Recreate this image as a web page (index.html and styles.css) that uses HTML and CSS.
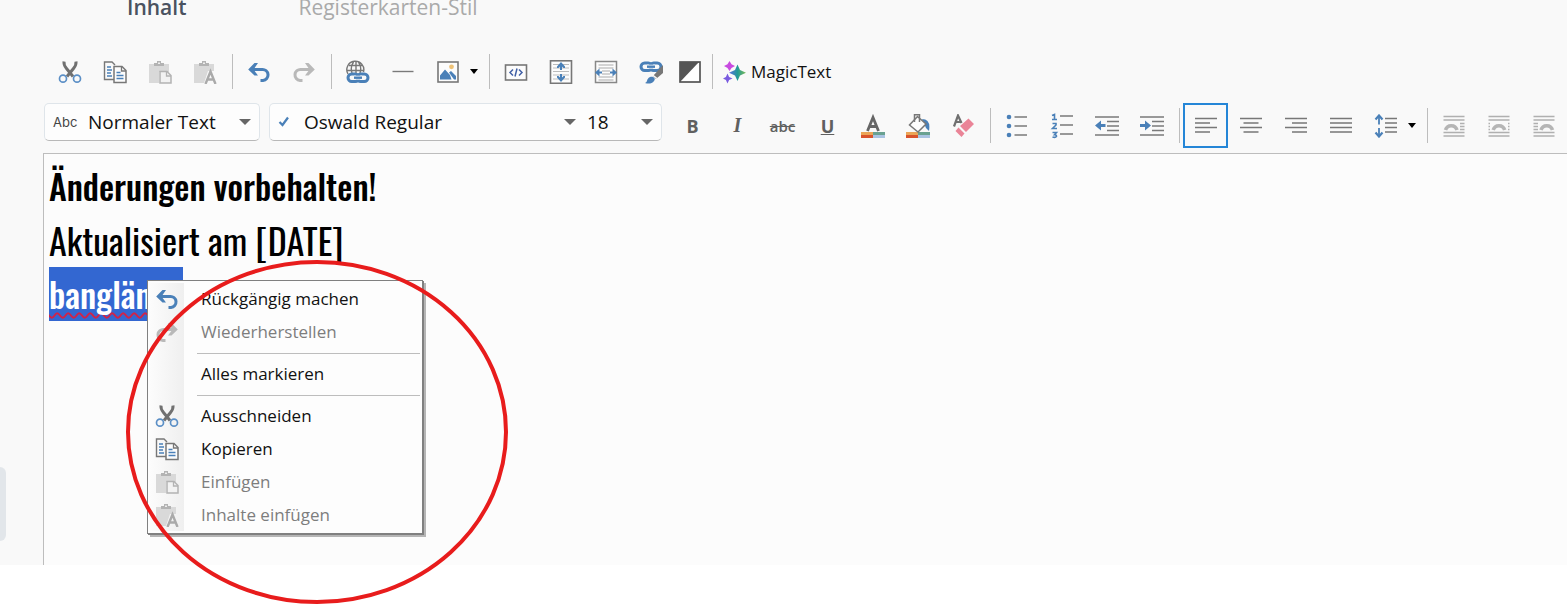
FILE: index.html
```html
<!DOCTYPE html>
<html lang="de">
<head>
<meta charset="utf-8">
<title>Texteditor</title>
<link rel="stylesheet" href="styles.css">
</head>
<body>
<svg class="defs" aria-hidden="true">
  <symbol id="cut" viewBox="0 0 24 24">
    <path d="M6 1.500Q5.500 5 8.500 8.500L15 16.500M18 1.500Q18.500 5 15.500 8.500L9 16.500" fill="none" stroke="#707070" stroke-width="3"/>
    <g fill="none" stroke="#5b8fc6" stroke-width="1.700"><circle cx="5" cy="18.700" r="3.500"/><circle cx="19" cy="18.700" r="3.500"/></g>
  </symbol>
  <symbol id="copy" viewBox="0 0 24 24">
    <path d="M11 19.500H1.500V2H9l3 3" fill="none" stroke="#777" stroke-width="1.400"/>
    <path d="M4 7h4M4 10h5M4 13h4M4 16h5" stroke="#4a80b8" stroke-width="1.300"/>
    <path d="M11 6.500h8l4 4V22.500H11z" fill="#fcfcfc" stroke="#777" stroke-width="1.500"/>
    <path d="M18.500 7v4H23" fill="none" stroke="#777" stroke-width="1.300"/>
    <path d="M13.500 12.500h4M13.500 15.500h7M13.500 18.500h7" stroke="#4a80b8" stroke-width="1.400"/>
  </symbol>
  <symbol id="board" viewBox="0 0 24 24">
    <path d="M1 4h20v8H11v11H1z" fill="#d9d9d9"/>
    <path d="M6 6V3h3V1h4v2h3v3z" fill="#b3b3b3"/><path d="M10 2.500h2v1.500h-2z" fill="#eee"/>
  </symbol>
  <symbol id="paste" viewBox="0 0 24 24">
    <use href="#board"/>
    <path d="M12 11.500h7l4 4V23H12z" fill="#f2f2f2" stroke="#b3b3b3" stroke-width="1.500"/>
    <path d="M18.500 11.500v4.500H23" fill="none" stroke="#b3b3b3" stroke-width="1.300"/>
  </symbol>
  <symbol id="paste-text" viewBox="0 0 24 24">
    <path d="M1 4h20v7h-6l-4 12H1z" fill="#d9d9d9"/>
    <path d="M6 6V3h3V1h4v2h3v3z" fill="#b3b3b3"/><path d="M10 2.500h2v1.500h-2z" fill="#eee"/>
    <path d="M12.500 24 17.500 11.500l5 12.500M14.500 19.500h6" fill="none" stroke="#aaa" stroke-width="2.400"/>
  </symbol>
  <symbol id="undo" viewBox="0 0 24 24">
    <path d="M4 9.500h11a5.300 5.300 0 0 1 1 11h-2.500" fill="none" stroke="#4a80b8" stroke-width="3"/>
    <path d="M7.500 3H11L6.500 9.500l4.500 6H7.500L1.200 9.500z" fill="#4a80b8"/>
  </symbol>
  <symbol id="redo" viewBox="0 0 24 24">
    <path d="M20 9.500H9a5.300 5.300 0 0 0-1 11h2.500" fill="none" stroke="#b9b9b9" stroke-width="3"/>
    <path d="M16.500 3H13l4.500 6.500-4.500 6h3.500l6.300-6z" fill="#b9b9b9"/>
  </symbol>
  <symbol id="chain" viewBox="0 0 24 12">
    <g fill="none" stroke="#4a80b8" stroke-width="3"><rect x="2" y="2" width="11" height="7.500" rx="3.700"/><rect x="11" y="2" width="11" height="7.500" rx="3.700"/></g>
    <path d="M8 5.700h8" stroke="#f9f9f9" stroke-width="4"/><path d="M8 5.700h8" stroke="#4a80b8" stroke-width="2.400"/>
  </symbol>
  <symbol id="wrap-lines" viewBox="0 0 24 24">
    <path d="M1.500 2.500h21M1.500 6h21M1.500 18.500h21M1.500 22h21" stroke="#b0b0b0" stroke-width="1.700"/>
  </symbol>
</svg>

<div class="app">
  <aside class="rail"><div class="rail-handle"></div></aside>
  <main class="main">
    <nav class="tabs">
      <a class="tab tab-active" href="#inhalt">Inhalt</a>
      <a class="tab" href="#stil">Registerkarten-Stil</a>
    </nav>

    <div class="toolbar toolbar-top" role="toolbar">
      <button class="tool" aria-label="Ausschneiden"><svg class="icon"><use href="#cut"/></svg></button>
      <button class="tool" aria-label="Kopieren"><svg class="icon"><use href="#copy"/></svg></button>
      <button class="tool" aria-label="Einfügen" disabled><svg class="icon"><use href="#paste"/></svg></button>
      <button class="tool" aria-label="Inhalte einfügen" disabled><svg class="icon"><use href="#paste-text"/></svg></button>
      <span class="sep"></span>
      <button class="tool" aria-label="Rückgängig machen"><svg class="icon"><use href="#undo"/></svg></button>
      <button class="tool" aria-label="Wiederherstellen" disabled><svg class="icon"><use href="#redo"/></svg></button>
      <span class="sep"></span>
      <button class="tool" aria-label="Link"><svg class="icon" viewBox="0 0 24 24">
        <g fill="none" stroke="#777" stroke-width="1.400"><path d="M2 14a8.500 8.500 0 1 1 15.500-2M10 1v12M3 5.500h14M1 10.500h17M6 13q-2-6 1.500-11M14 13q2-6-1.500-11"/></g>
        <use href="#chain" y="12" width="24" height="12"/></svg></button>
      <button class="tool" aria-label="Linie"><svg class="icon" viewBox="0 0 24 24"><path d="M1.500 11.500h21" stroke="#7a7a7a" stroke-width="1.400"/></svg></button>
      <button class="tool" aria-label="Bild"><svg class="icon" viewBox="0 0 24 24">
        <rect x="2" y="2" width="20" height="20" fill="#fcfcfc" stroke="#777" stroke-width="1.600"/>
        <path d="M4 19.500v-4L9 9.500l5 5.500 1.500 4.500zM13 12.500l2-1.500 5 5v3.500h-2z" fill="#4a80b8"/><circle cx="15.500" cy="6.800" r="2.400" fill="#eec277"/></svg></button>
      <button class="drop" aria-label="Bildoptionen"><svg class="arrow" viewBox="0 0 8 5"><path d="M0 0h8L4 5z"/></svg></button>
      <span class="sep"></span>
      <button class="tool" aria-label="HTML"><svg class="icon" viewBox="0 0 24 24">
        <rect x="1.500" y="5" width="21" height="15" fill="#fcfcfc" stroke="#777" stroke-width="1.600"/>
        <path d="M9 9.500 6 12.500l3 3M15 9.500l3 3-3 3M13 8.500l-2 8" fill="none" stroke="#4160a6" stroke-width="1.500"/></svg></button>
      <button class="tool" aria-label="Höhe"><svg class="icon" viewBox="0 0 24 24">
        <rect x="1.500" y=".8" width="21" height="22.500" fill="#fcfcfc" stroke="#777" stroke-width="1.600"/>
        <path d="M4 4.500h16M4 8h16M4 11.500h16M4 15h16M4 19h16" stroke="#bbb" stroke-width="1.200"/>
        <path d="M12 3v7M12 14v7" stroke="#4a80b8" stroke-width="2"/><path d="M8 6.500 12 2l4 4.500v1.500h-1.500L12 5.500 9.500 8H8zM8 17.500l4 4.500 4-4.500V16h-1.500L12 18.500 9.500 16H8z" fill="#4a80b8"/></svg></button>
      <button class="tool" aria-label="Breite"><svg class="icon" viewBox="0 0 24 24">
        <rect x="1.500" y="1.500" width="21" height="21" fill="#fcfcfc" stroke="#888" stroke-width="1.500"/>
        <path d="M4.500 5h15M4.500 8h15M8 11h8M8 14h8M4.500 17h15M4.500 20h15" stroke="#aaa" stroke-width="1.200"/>
        <path d="M1 12.500l4.500-4v3H8v2H5.500v3zM23 12.500l-4.500-4v3H16v2h2.500v3z" fill="#4a80b8"/></svg></button>
      <button class="tool" aria-label="Linkstil"><svg class="icon" viewBox="0 0 24 24">
        <use href="#chain" y="1" width="24" height="12"/>
        <path d="M24 5v8l-7 6-3-3z" fill="#777"/><path d="M6 23c3-1 1-4 5-6 4-1 6 2 4 4-2 3-6 3-9 2z" fill="#4a80b8"/><path d="M13 14.500l5 4" stroke="#f9f9f9" stroke-width="1.500"/></svg></button>
      <button class="tool tool-narrow" aria-label="Kontrast"><svg class="icon" viewBox="0 0 24 24">
        <rect x="2" y="2" width="20" height="20" fill="#fff" stroke="#555" stroke-width="1.700"/><path d="M2 2h19L2 22z" fill="#555"/></svg></button>
      <span class="sep"></span>
      <button class="magic"><svg class="icon" viewBox="0 0 24 24">
        <defs><linearGradient id="spark"><stop offset="0" stop-color="#5a6ee0"/><stop offset=".5" stop-color="#229b96"/><stop offset="1" stop-color="#7dba56"/></linearGradient></defs>
        <path d="M14.500 4.500l2.500 5.500 6 2.700-6 2.700-2.500 5.600-2.500-5.600-6-2.700 6-2.700z" fill="url(#spark)"/>
        <path d="M6.500 1l2 3.200L12 6 8.500 7.900 6.500 11 4.500 7.900 1 6l3.500-1.800z" fill="#c84be0"/><path d="M4.500 13.500l1.600 3.400 3.400 1.600-3.400 1.600L4.500 23.500l-1.600-3.400L0 18.500l2.900-1.600z" fill="#7a5be0"/></svg>MagicText</button>
    </div>

    <div class="toolbar toolbar-format" role="toolbar">
      <div class="combo combo-style">
        <span class="abc">Abc</span>
        <select class="select" aria-label="Absatzformat"><option>Normaler Text</option></select>
        <svg class="caret" viewBox="0 0 12 6"><path d="M0 0h12L6 6z"/></svg>
      </div>
      <div class="combo combo-font">
        <svg class="check" viewBox="0 0 12 12"><path d="M1.500 6l3 3L10 1.500" fill="none" stroke="#4a80b8" stroke-width="2.200"/></svg>
        <select class="select" aria-label="Schriftart"><option>Oswald Regular</option></select>
        <svg class="caret" viewBox="0 0 12 6"><path d="M0 0h12L6 6z"/></svg>
        <select class="select select-size" aria-label="Schriftgröße"><option>18</option></select>
        <svg class="caret" viewBox="0 0 12 6"><path d="M0 0h12L6 6z"/></svg>
      </div>
      <button class="tool letter letter-b">B</button>
      <button class="tool letter letter-i">I</button>
      <button class="tool letter letter-s">abc</button>
      <button class="tool letter letter-u">U</button>
      <button class="tool" aria-label="Textfarbe"><svg class="icon" viewBox="0 0 24 24">
        <path d="M6.500 17 12 3.500 17.500 17M8 12.500h8" fill="none" stroke="#666" stroke-width="2.800"/>
        <path d="M0 18h12v3H0z" fill="#eba557"/><path d="M0 21h12v3H0z" fill="#d9532c"/><path d="M12 18h12v3H12z" fill="#69a191"/><path d="M12 21h12v3H12z" fill="#a9c3e2"/></svg></button>
      <button class="tool" aria-label="Hintergrundfarbe"><svg class="icon" viewBox="0 0 24 24">
        <path d="M0 18h12v3H0z" fill="#eba557"/><path d="M0 21h12v3H0z" fill="#d9532c"/><path d="M12 18h12v3H12z" fill="#69a191"/><path d="M12 21h12v3H12z" fill="#a9c3e2"/>
        <path d="M16 5q9 0 7 12l-3-3z" fill="#4a80b8"/><path d="M11.500 2.500 20 10 12 18 3.500 11z" fill="#fcfcfc" stroke="#777" stroke-width="1.500"/><path d="M8.500 8V.8h5V8" fill="none" stroke="#777" stroke-width="1.500"/></svg></button>
      <button class="tool" aria-label="Formatierung löschen"><svg class="icon" viewBox="0 0 24 24">
        <path d="M3 12.500 7 1.500l3.500 7.500M5 8h5" fill="none" stroke="#707070" stroke-width="2.200"/>
        <path d="M17.500 4.500l5.500 5.500-8 8-6-6zM7.500 13.500l6 6-3 3.500-6-6z" fill="#ea8497"/></svg></button>
      <span class="sep"></span>
      <button class="tool" aria-label="Aufzählung"><svg class="icon" viewBox="0 0 24 24">
        <path d="M9.500 3h12.500M9.500 12h12.500M9.500 21h12.500" stroke="#7a7a7a" stroke-width="1.500"/><g fill="#4a80b8"><circle cx="4" cy="3" r="2.300"/><circle cx="4" cy="12" r="2.300"/><circle cx="4" cy="21" r="2.300"/></g></svg></button>
      <button class="tool" aria-label="Nummerierung"><svg class="icon icon-tall" viewBox="0 0 24 26">
        <path d="M10 3h13M10 12h13M10 21h13" stroke="#7a7a7a" stroke-width="1.500"/>
        <path d="M2 2.500l2.500-1V6M2 6.500h5M2.500 10.500h3.500v1.500L2.500 15.500H7M2.500 19.500h4l-2 2.300q2 0 2 1.600-1 1.600-4 .6" fill="none" stroke="#4a80b8" stroke-width="1.600"/></svg></button>
      <button class="tool" aria-label="Einzug verkleinern"><svg class="icon" viewBox="0 0 24 24">
        <path d="M0 3h24M12 7.500h12M12 12h12M12 16.500h12M0 21h24" stroke="#7a7a7a" stroke-width="1.500"/><path d="M0 11.500l6-5v3.500h4.500v3H6v3.500z" fill="#4a80b8"/></svg></button>
      <button class="tool" aria-label="Einzug vergrößern"><svg class="icon" viewBox="0 0 24 24">
        <path d="M0 3h24M12 7.500h12M12 12h12M12 16.500h12M0 21h24" stroke="#7a7a7a" stroke-width="1.500"/><path d="M11 11.500l-6-5v3.500H0v3h5v3.500z" fill="#4a80b8"/></svg></button>
      <span class="sep"></span>
      <button class="tool tool-on" aria-label="Linksbündig" aria-pressed="true"><svg class="icon" viewBox="0 0 24 24"><path d="M1 4.500h22M1 9h15M1 13.500h22M1 18h15" stroke="#777" stroke-width="1.600"/></svg></button>
      <button class="tool" aria-label="Zentriert"><svg class="icon" viewBox="0 0 24 24"><path d="M1 4.500h22M4.500 9h15M1 13.500h22M4.500 18h15" stroke="#777" stroke-width="1.600"/></svg></button>
      <button class="tool" aria-label="Rechtsbündig"><svg class="icon" viewBox="0 0 24 24"><path d="M1 4.500h22M8 9h15M1 13.500h22M8 18h15" stroke="#777" stroke-width="1.600"/></svg></button>
      <button class="tool" aria-label="Blocksatz"><svg class="icon" viewBox="0 0 24 24"><path d="M1 4.500h22M1 9h22M1 13.500h22M1 18h22" stroke="#777" stroke-width="1.600"/></svg></button>
      <button class="tool" aria-label="Zeilenabstand"><svg class="icon" viewBox="0 0 24 24">
        <path d="M11 4.500h12M11 9h12M11 13.500h12M11 18h12" stroke="#777" stroke-width="1.600"/><path d="M5 1v9.500M5 14v9" stroke="#4a80b8" stroke-width="1.800"/><path d="M1.500 5.500 5 1.500l3.500 4M1.500 18.500 5 22.500l3.500-4" fill="none" stroke="#4a80b8" stroke-width="2.200"/></svg></button>
      <button class="drop" aria-label="Abstandsoptionen"><svg class="arrow" viewBox="0 0 8 5"><path d="M0 0h8L4 5z"/></svg></button>
      <span class="sep"></span>
      <button class="tool" aria-label="Bild links" disabled><svg class="icon" viewBox="0 0 24 24"><use href="#wrap-lines"/><path d="M3.500 16a6 6 0 0 1 11.500 0" fill="none" stroke="#b5b5b5" stroke-width="3.600"/><path d="M18 9.500h4.500M18 12.500h4.500M18 15.500h4.500" stroke="#b0b0b0" stroke-width="1.400"/></svg></button>
      <button class="tool" aria-label="Bild zentriert" disabled><svg class="icon" viewBox="0 0 24 24"><use href="#wrap-lines"/><path d="M6.200 16a6 6 0 0 1 11.500 0" fill="none" stroke="#b5b5b5" stroke-width="3.600"/><path d="M1.500 9.500H3M1.500 12.500H3M1.500 15.500H3M21 9.500h1.500M21 12.500h1.500M21 15.500h1.500" stroke="#b0b0b0" stroke-width="1.400"/></svg></button>
      <button class="tool" aria-label="Bild rechts" disabled><svg class="icon" viewBox="0 0 24 24"><use href="#wrap-lines"/><path d="M9 16a6 6 0 0 1 11.500 0" fill="none" stroke="#b5b5b5" stroke-width="3.600"/><path d="M1.500 9.500H6M1.500 12.500H6M1.500 15.500H6" stroke="#b0b0b0" stroke-width="1.400"/></svg></button>
    </div>

    <section class="editor">
      <p class="line line-bold">Änderungen vorbehalten!</p>
      <p class="line">Aktualisiert am [DATE]</p>
      <p class="line line-bold"><span class="selection"><span class="typo">banglän</span></span></p>

      <div class="menu" role="menu">
        <button class="item" role="menuitem"><svg class="icon"><use href="#undo"/></svg>Rückgängig machen</button>
        <button class="item" role="menuitem" disabled><svg class="icon"><use href="#redo"/></svg>Wiederherstellen</button>
        <hr class="rule">
        <button class="item" role="menuitem"><span class="icon"></span>Alles markieren</button>
        <hr class="rule">
        <button class="item" role="menuitem"><svg class="icon"><use href="#cut"/></svg>Ausschneiden</button>
        <button class="item" role="menuitem"><svg class="icon"><use href="#copy"/></svg>Kopieren</button>
        <button class="item" role="menuitem" disabled><svg class="icon"><use href="#paste"/></svg>Einfügen</button>
        <button class="item" role="menuitem" disabled><svg class="icon"><use href="#paste-text"/></svg>Inhalte einfügen</button>
      </div>
      <svg class="ring" viewBox="0 0 382 344"><ellipse cx="191" cy="172" rx="189" ry="170" fill="none" stroke="#e81c1c" stroke-width="4"/></svg>
    </section>
  </main>
</div>
</body>
</html>
```

FILE: styles.css
```css
* { box-sizing: border-box; }

body {
  margin: 0;
  min-height: 100vh;
  background: #fff;
  font-family: "Open Sans", "Noto Sans", sans-serif;
  color: #111;
}

button, select { font: inherit; color: inherit; }
button { border: 0; padding: 0; background: none; }
.defs { position: absolute; width: 0; height: 0; }

.app {
  display: flex;
  height: calc(100vh - 40px);
  background: #f9f9f9;
}

.rail {
  flex: none;
  display: flex;
  flex-direction: column;
  justify-content: flex-end;
  width: 43px;
  padding-bottom: 24px;
}
.rail-handle {
  width: 6px;
  height: 74px;
  border-radius: 0 6px 6px 0;
  background: #e2e6ea;
}

.main {
  flex: 1;
  min-width: 0;
  display: flex;
  flex-direction: column;
}

.tabs {
  display: flex;
  align-items: flex-end;
  gap: 112px;
  height: 21px;
  padding-left: 84px;
  font-size: 21px;
  line-height: 28px;
}
.tab { color: #aaa; text-decoration: none; }
.tab-active { color: #4a5260; font-weight: 600; }

.toolbar { display: flex; align-items: center; height: 45px; }
.toolbar-top { margin-top: 28px; padding-left: 4px; }
.toolbar-format { margin-top: 9px; padding-left: 1px; }

.tool {
  flex: none;
  display: flex;
  align-items: center;
  justify-content: center;
  width: 45px;
  height: 45px;
}
.tool-narrow { width: 34px; }
.tool-on { border: 2px solid #2586d7; }
.icon { flex: none; display: block; width: 24px; height: 24px; }
.icon-tall { height: 26px; }
.sep {
  flex: none;
  width: 1px;
  height: 35px;
  margin: 0 3px 0 5px;
  background: #bdbdbd;
}
.drop { flex: none; display: flex; align-items: center; width: 14px; height: 45px; }
.arrow { width: 8px; height: 5px; }
.magic {
  display: flex;
  align-items: center;
  gap: 4px;
  margin-left: 7px;
  font-size: 17px;
}

.combo {
  flex: none;
  align-self: flex-start;
  display: flex;
  align-items: center;
  height: 38px;
  padding: 0 8px;
  border: 1px solid #dfe5ea;
  border-bottom-color: #b8b8b8;
  border-radius: 5px;
  background: #fdfdfd;
  font-size: 19px;
}
.combo-style { width: 216px; margin-right: 9px; }
.combo-font { width: 393px; margin-right: 8px; }
.abc { width: 35px; font-family: Inter, sans-serif; font-size: 13px; color: #444; }
.select {
  flex: 1;
  min-width: 0;
  height: 36px;
  padding: 0;
  border: 0;
  background: none;
  appearance: none;
}
.select-size { flex: none; width: 54px; margin-left: 11px; }
.caret { flex: none; width: 12px; height: 6px; fill: #666; }
.check { flex: none; width: 12px; height: 12px; margin-right: 14px; }

.letter { font-size: 18px; color: #606060; }
.letter-b { font-weight: 700; }
.letter-i { font-family: "Liberation Serif", serif; font-size: 20px; font-style: italic; font-weight: 700; }
.letter-s { font-size: 15px; font-weight: 600; text-decoration: line-through; }
.letter-u { font-weight: 700; text-decoration: underline; }

.editor {
  position: relative;
  flex: 1;
  margin-top: 5px;
  padding: 5px;
  border-top: 1px solid #bdbdbd;
  border-left: 1px solid #bdbdbd;
  background: #fcfcfc;
}
.line {
  height: 54px;
  margin: 0;
  font-family: Oswald, "Roboto Condensed", Roboto, sans-serif;
  font-size: 36px;
  font-weight: 400;
  line-height: 54px;
  color: #000;
}
.line-bold { font-size: 34px; font-weight: 500; }
.selection {
  display: inline-block;
  width: 134px;
  height: 54px;
  background: #3367d1;
  color: #fff;
}
.typo { text-decoration: underline wavy #d02348 2px; text-decoration-skip-ink: none; text-underline-offset: 3px; }

.menu {
  position: absolute;
  left: 103px;
  top: 126px;
  width: 276px;
  padding: 1px 2px 2px;
  border: 1px solid #808080;
  background: linear-gradient(90deg, #fcfcfc, #efefef) 2px 2px / 34px calc(100% - 4px) no-repeat #fdfdfd;
  box-shadow: 1px 1px 0 #808080, 3px 3px 0 #b5b5b5;
}
.item {
  display: flex;
  align-items: center;
  gap: 22px;
  width: 100%;
  height: 33px;
  padding-left: 5px;
  font-size: 17px;
  text-align: left;
}
.item:disabled { color: #7d7d7d; }
.rule { height: 1px; margin: 5px 0 3px 47px; border: 0; background: #bdbdbd; }

.ring {
  position: absolute;
  left: 82px;
  top: 106px;
  width: 382px;
  height: 344px;
  pointer-events: none;
}
```
